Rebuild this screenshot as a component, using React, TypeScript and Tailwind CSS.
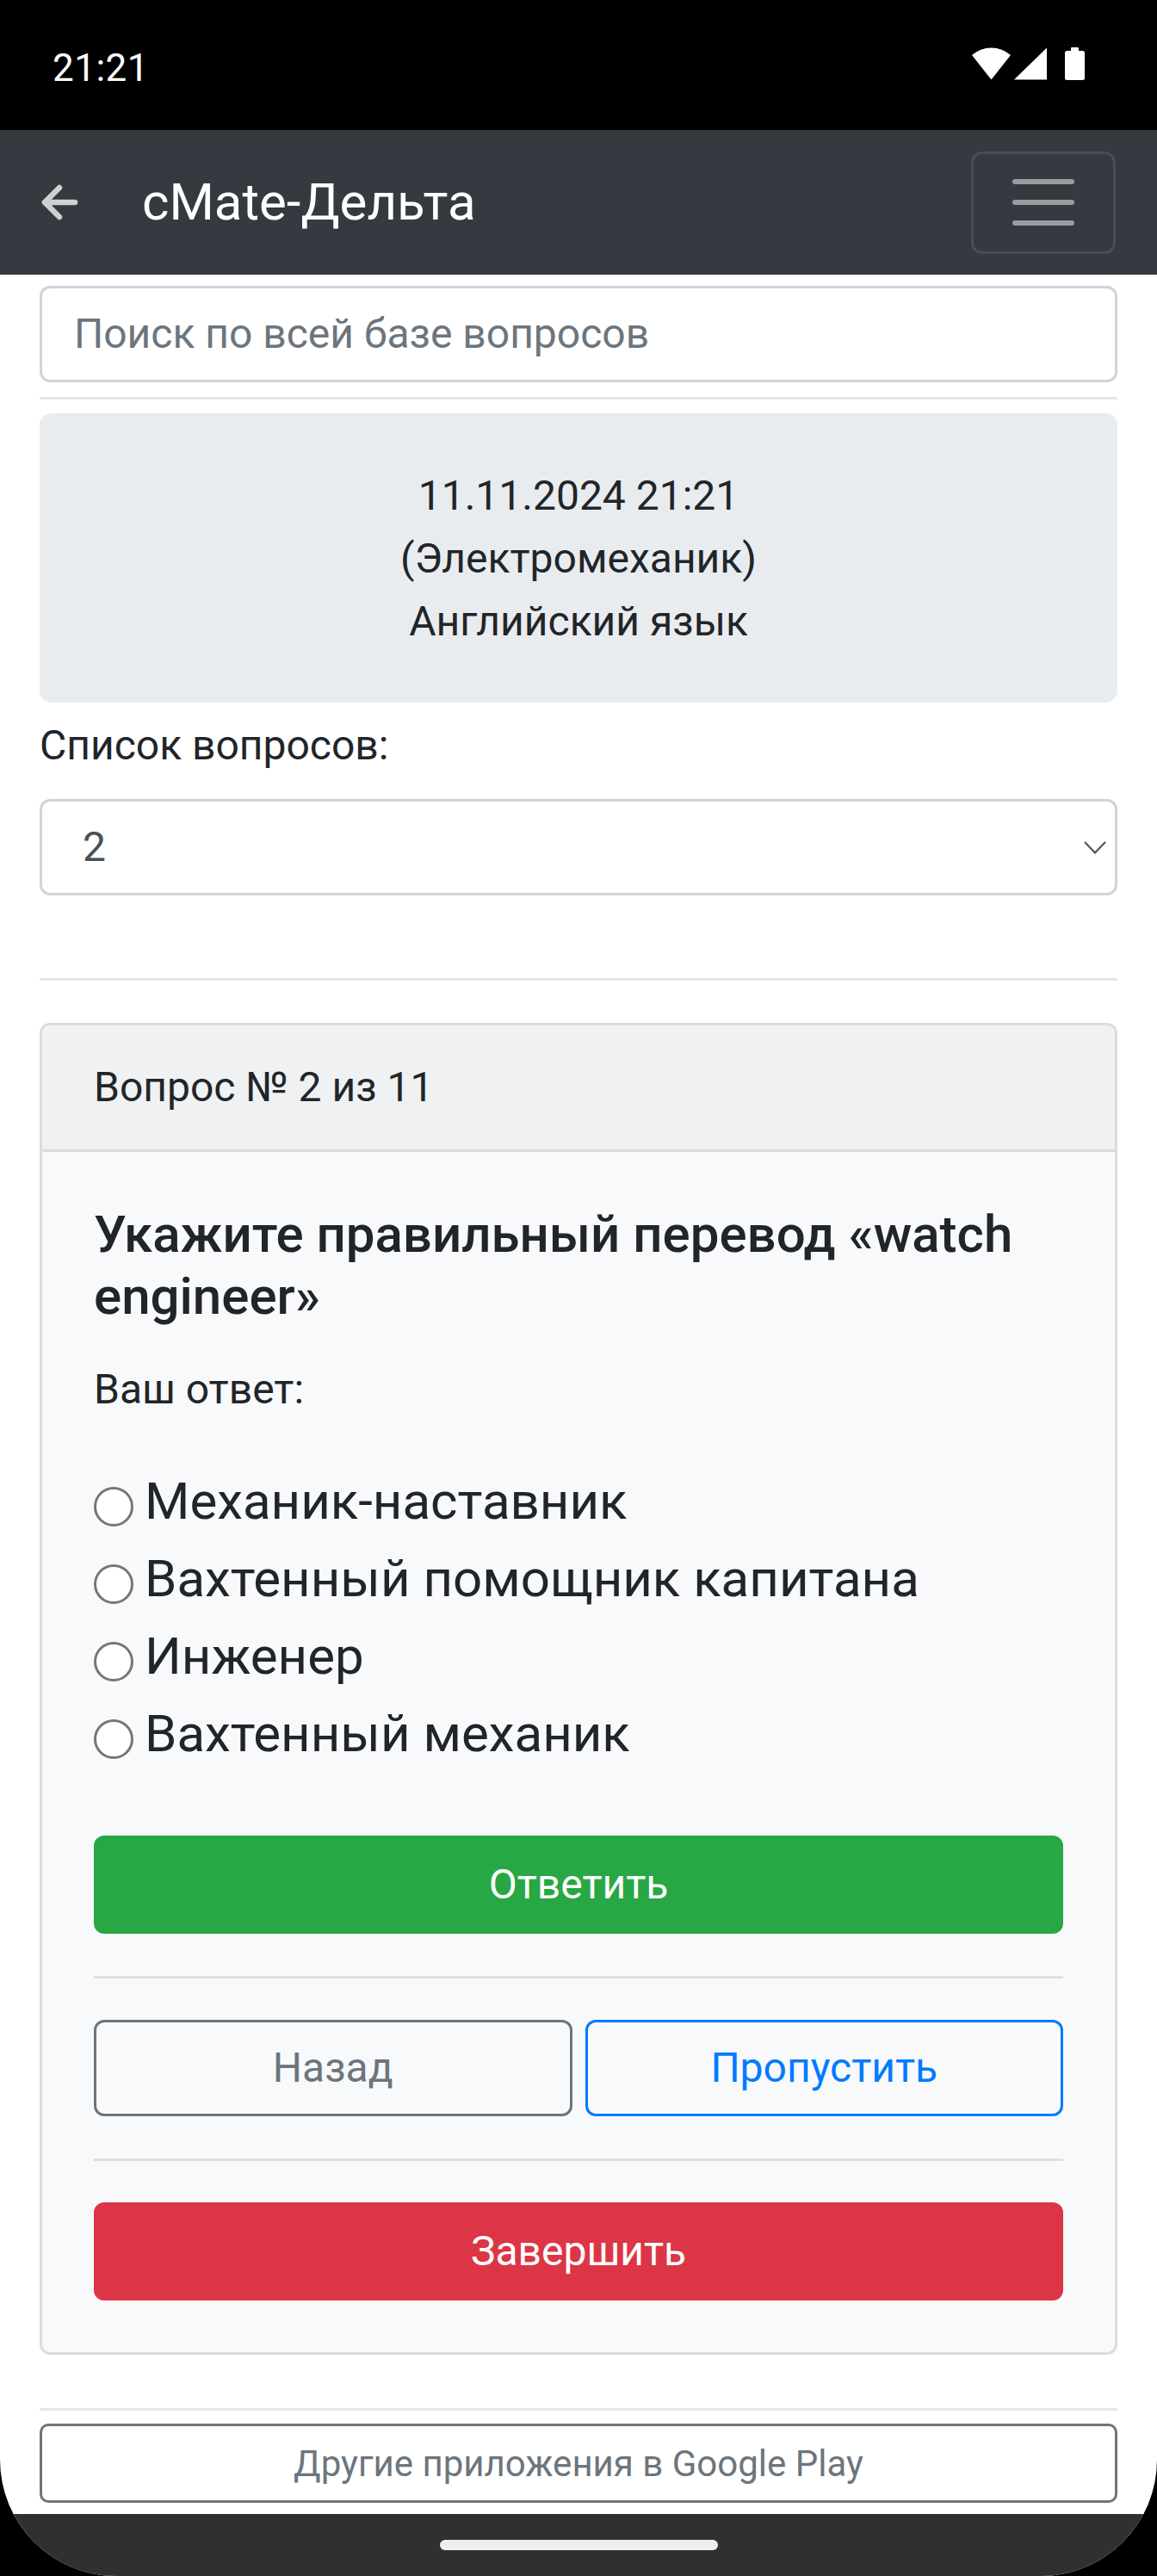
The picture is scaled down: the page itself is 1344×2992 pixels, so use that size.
import React from "react";

function StatusBar() {
  return (
    <div className="h-[151px] bg-black flex items-start justify-between relative">
      <div className="text-white text-[44px] leading-none mt-[57px] ml-[61px] tracking-[0.5px]">21:21</div>
      <div className="flex items-end gap-0 mt-[55px] mr-[84px]">
        <svg width="45" height="38" viewBox="0 0 45 38" className="mr-[4px]">
          <path d="M0 9 A34 34 0 0 1 45 9 L22.5 37.5 Z" fill="#fff" />
        </svg>
        <svg width="38" height="38" viewBox="0 0 38 38" className="mr-[21px]">
          <path d="M0 37.5 L38 37.5 L38 0.5 Z" fill="#fff" />
        </svg>
        <svg width="23" height="38" viewBox="0 0 23 38">
          <rect x="7" y="0" width="9" height="5" rx="1" fill="#fff" />
          <rect x="0" y="4" width="23" height="34" rx="2.5" fill="#fff" />
        </svg>
      </div>
    </div>
  );
}

function NavBar() {
  return (
    <div className="h-[168px] bg-[#343a40] flex items-center">
      <svg width="44" height="42" viewBox="0 0 44 42" className="ml-[47px]">
        <path d="M40 21 H5 M22 4 L5 21 L22 38" fill="none" stroke="#cfd0d2" strokeWidth="6.5" strokeLinecap="round" strokeLinejoin="round" />
      </svg>
      <div className="ml-[74px] text-white text-[60px] leading-none">cMate-Дельта</div>
      <div className="ml-auto mr-[48px] w-[168px] h-[119px] border-[3px] border-[#484e53] rounded-[13px] flex flex-col items-center justify-center gap-[18px]">
        <div className="w-[72px] h-[6px] rounded-full bg-[#9a9da0]" />
        <div className="w-[72px] h-[6px] rounded-full bg-[#9a9da0]" />
        <div className="w-[72px] h-[6px] rounded-full bg-[#9a9da0]" />
      </div>
    </div>
  );
}

function Radio({ label }: { label: string }) {
  return (
    <div className="flex items-start h-[90px]">
      <div className="mt-[28px] w-[46px] h-[46px] rounded-full border-[3px] border-[#767676] bg-white shrink-0" />
      <div className="ml-[13px] text-[60px] leading-[90px] text-[#212529]">{label}</div>
    </div>
  );
}

export default function App() {
  return (
    <div className="w-[1344px] h-[2992px] bg-black font-[Roboto,sans-serif] text-[#212529]">
      <div className="w-[1344px] h-[2992px] bg-white rounded-b-[135px] overflow-hidden flex flex-col">
        <StatusBar />
        <NavBar />
        <div className="px-[46px] flex flex-col flex-1">
          <div className="mt-[13px] h-[112px] border-[3px] border-[#ced4da] rounded-[12px] flex items-center pl-[37px] text-[48px] text-[#6c757d]">
            Поиск по всей базе вопросов
          </div>
          <div className="mt-[17px] h-[3px] bg-[#e6e6e6]" />
          <div className="mt-[16px] h-[336px] rounded-[14px] bg-[#e9ecef] flex flex-col items-center justify-center text-[48px] leading-[73px]">
            <div>11.11.2024 21:21</div>
            <div>(Электромеханик)</div>
            <div>Английский язык</div>
          </div>
          <div className="mt-[14px] text-[48px] leading-[72px]">Список вопросов:</div>
          <div className="mt-[26px] h-[112px] border-[3px] border-[#ced4da] rounded-[12px] flex items-center pl-[47px] pr-[10px] text-[48px] text-[#495057]">
            <span>2</span>
            <svg width="26" height="15" viewBox="0 0 26 15" className="ml-auto">
              <path d="M1 1 L13 13.5 L25 1" fill="none" stroke="#555" strokeWidth="2.2" />
            </svg>
          </div>
          <div className="mt-[96px] h-[3px] bg-[#e6e6e6]" />
          <div className="mt-[49px] border-[3px] border-[#dadcde] rounded-[12px] bg-[#f8f9fa] overflow-hidden">
            <div className="h-[147px] bg-[#f0f1f2] border-b-[3px] border-[#dadcde] flex items-center px-[60px] text-[48px]">
              Вопрос № 2 из 11
            </div>
            <div className="px-[60px] pt-[60px] pb-[60px] flex flex-col">
              <div className="text-[60px] leading-[72px] font-medium">
                Укажите правильный перевод «watch engineer»
              </div>
              <div className="mt-[36px] text-[48px] leading-[72px]">Ваш ответ:</div>
              <div className="mt-[49px] flex flex-col">
                <Radio label="Механик-наставник" />
                <Radio label="Вахтенный помощник капитана" />
                <Radio label="Инженер" />
                <Radio label="Вахтенный механик" />
              </div>
              <div className="mt-[73px] h-[114px] rounded-[12px] bg-[#28a745] text-white text-[48px] flex items-center justify-center">
                Ответить
              </div>
              <div className="mt-[49px] h-[3px] bg-[#dfe0e1]" />
              <div className="mt-[48px] grid grid-cols-2 gap-[15px]">
                <div className="h-[112px] rounded-[12px] border-[3px] border-[#6c757d] text-[#6c757d] text-[48px] flex items-center justify-center">
                  Назад
                </div>
                <div className="h-[112px] rounded-[12px] border-[3px] border-[#007bff] text-[#007bff] text-[48px] flex items-center justify-center">
                  Пропустить
                </div>
              </div>
              <div className="mt-[49px] h-[3px] bg-[#dfe0e1]" />
              <div className="mt-[48px] h-[114px] rounded-[12px] bg-[#dc3545] text-white text-[48px] flex items-center justify-center">
                Завершить
              </div>
            </div>
          </div>
          <div className="mt-[62px] h-[3px] bg-[#e6e6e6]" />
          <div className="mt-[15px] h-[92px] rounded-[10px] border-[3px] border-[#6c757d] text-[#6c757d] text-[42px] flex items-center justify-center">
            Другие приложения в Google Play
          </div>
          <div className="flex-1" />
        </div>
        <div className="h-[72px] bg-[#303030] flex justify-center pt-[30px] shrink-0">
          <div className="w-[323px] h-[12px] rounded-full bg-[#eeeeee]" />
        </div>
      </div>
    </div>
  );
}
